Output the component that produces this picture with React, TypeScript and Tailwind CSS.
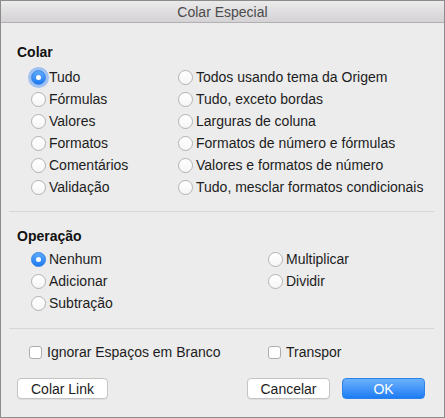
import type { ReactNode } from "react";

const Radio = ({
  label,
  checked = false,
  focused = false,
}: {
  label: string;
  checked?: boolean;
  focused?: boolean;
}) => (
  <div className="flex items-center h-[22px]">
    {checked ? (
      <span
        className={`flex items-center justify-center w-[15px] h-[15px] rounded-full bg-gradient-to-b from-[#5eaafc] to-[#1a7af3] border border-[#2f7fe6] ${
          focused ? "shadow-[0_0_0_3px_rgba(96,160,247,0.55)]" : ""
        }`}
      >
        <span className="w-[5px] h-[5px] rounded-full bg-white" />
      </span>
    ) : (
      <span className="w-[15px] h-[15px] rounded-full bg-gradient-to-b from-white to-[#f6f6f6] border border-[#b3b3b3]" />
    )}
    <span className="ml-[3px] text-[14px] text-[#1c1c1c] leading-none">{label}</span>
  </div>
);

const Check = ({ label }: { label: string }) => (
  <div className="flex items-center h-[22px]">
    <span className="w-[13px] h-[13px] rounded-[3px] bg-white border border-[#adadad]" />
    <span className="ml-[5px] text-[14px] text-[#1c1c1c] leading-none">{label}</span>
  </div>
);

const Button = ({
  children,
  width,
  primary = false,
}: {
  children: ReactNode;
  width: string;
  primary?: boolean;
}) => (
  <button
    className={`${width} h-[21px] rounded-[4px] text-[14px] leading-none flex items-center justify-center ${
      primary
        ? "bg-gradient-to-b from-[#69b1fb] to-[#1b7cf4] border border-[#2d82ea] text-white"
        : "bg-white border border-[#c4c4c4] text-[#1c1c1c] shadow-[0_1px_0_rgba(0,0,0,0.06)]"
    }`}
  >
    {children}
  </button>
);

const Separator = ({ className }: { className: string }) => (
  <div className={`h-px bg-[#d6d6d6] ml-2 mr-[10px] ${className}`} />
);

export default function App() {
  return (
    <div
      className="w-[445px] h-[418px] border border-[#8c8c8c] bg-[#ececec] flex flex-col"
      style={{ fontFamily: '"Liberation Sans", Arial, sans-serif' }}
    >
      {/* title bar */}
      <div className="h-[22px] shrink-0 border-b border-[#b1b1b1] bg-gradient-to-b from-[#ecebec] to-[#d4d2d4] flex items-center justify-center">
        <span className="text-[14px] text-[#4b4b4b] leading-none">Colar Especial</span>
      </div>

      {/* Colar */}
      <div className="pt-[21px] pl-4">
        <p className="text-[14px] font-bold text-[#111] leading-4">Colar</p>
      </div>
      <div className="mt-[6px] ml-[30px] grid grid-cols-[147px_1fr]">
        <div className="flex flex-col">
          <Radio label="Tudo" checked focused />
          <Radio label="Fórmulas" />
          <Radio label="Valores" />
          <Radio label="Formatos" />
          <Radio label="Comentários" />
          <Radio label="Validação" />
        </div>
        <div className="flex flex-col">
          <Radio label="Todos usando tema da Origem" />
          <Radio label="Tudo, exceto bordas" />
          <Radio label="Larguras de coluna" />
          <Radio label="Formatos de número e fórmulas" />
          <Radio label="Valores e formatos de número" />
          <Radio label="Tudo, mesclar formatos condicionais" />
        </div>
      </div>

      <Separator className="mt-[13px]" />

      {/* Operação */}
      <div className="pt-[16px] pl-4">
        <p className="text-[14px] font-bold text-[#111] leading-4">Operação</p>
      </div>
      <div className="mt-[4px] ml-[30px] grid grid-cols-[237px_1fr]">
        <div className="flex flex-col">
          <Radio label="Nenhum" checked />
          <Radio label="Adicionar" />
          <Radio label="Subtração" />
        </div>
        <div className="flex flex-col">
          <Radio label="Multiplicar" />
          <Radio label="Dividir" />
        </div>
      </div>

      <Separator className="mt-[14px]" />

      {/* options */}
      <div className="mt-[12px] ml-[28px] grid grid-cols-[239px_1fr]">
        <Check label="Ignorar Espaços em Branco" />
        <Check label="Transpor" />
      </div>

      {/* buttons */}
      <div className="mt-[15px] pl-4 pr-[19px] flex items-center">
        <Button width="w-[91px]">Colar Link</Button>
        <div className="flex-1" />
        <Button width="w-[83px]">Cancelar</Button>
        <div className="w-[12px]" />
        <Button width="w-[83px]" primary>
          OK
        </Button>
      </div>
    </div>
  );
}
